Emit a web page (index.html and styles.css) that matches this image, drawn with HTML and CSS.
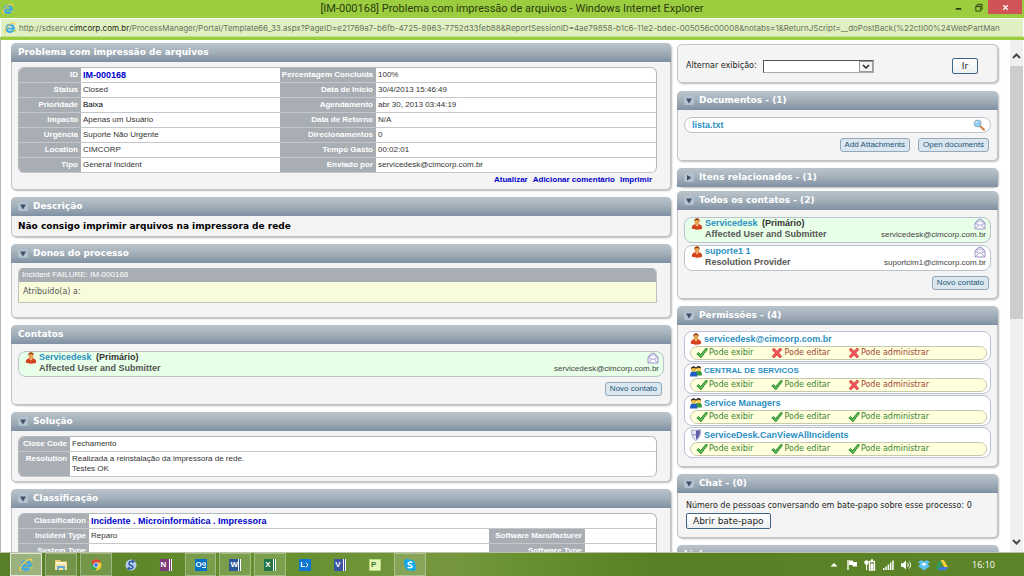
FILE: index.html
```html
<!DOCTYPE html>
<html lang="pt-BR">
<head>
<meta charset="utf-8">
<title>[IM-000168] Problema com impressão de arquivos</title>
<link rel="stylesheet" href="styles.css">
</head>
<body>
<svg class="defs" aria-hidden="true">
  <symbol id="ie" viewBox="0 0 16 16">
    <circle cx="8" cy="8.500" r="4.800" fill="none" stroke="#3fa9e8" stroke-width="3"/>
    <path d="M4 8.800h10" stroke="#3fa9e8" stroke-width="2.200"/>
    <path d="M11 10.200h5v2l-3 1z" fill="#a9cf63"/>
    <path d="M2.500 14.500C-.5 14 2 8 6.500 4.500 10.500 1 15.500.2 14.500 4" fill="none" stroke="#f3cf4a" stroke-width="1.500"/>
  </symbol>
  <symbol id="user" viewBox="0 0 12 12">
    <path d="M.8 10.500C.6 7.500 2.500 6 6 6s5.400 1.500 5.200 4.500c-2 1.600-8.400 1.600-10.400 0z" fill="#d3431c"/>
    <path d="M4.200 6.200 6 8.700l1.800-2.500z" fill="#ffc98a"/>
    <ellipse cx="6" cy="3.400" rx="2.500" ry="3" fill="#e8a254"/>
    <path d="M3.300 3.200C3.200-.6 8.800-.6 8.700 3.200 7.500 1.800 5 1.600 3.300 3.200z" fill="#9a3d12"/>
  </symbol>
  <symbol id="group" viewBox="0 0 12 12">
    <path d="M5 9.500c0-2.800 1-3.800 3.500-3.800S12 7 12 10.500H6z" fill="#3a9a35"/>
    <circle cx="8.600" cy="3.800" r="2.500" fill="#f5ca58"/>
    <path d="M6 3.800C5.800.2 11.400.2 11.200 3.800 10 2.300 7.500 2.300 6 3.800z" fill="#2b2723"/>
    <path d="M0 11.500C0 8 1 6.300 3.600 6.300S7.400 8 7.400 11.500z" fill="#1f5fc4"/>
    <circle cx="3.600" cy="4" r="2.600" fill="#f0c040"/>
    <path d="M.9 4C.8.300 6.500.3 6.300 4 5 2.500 2.500 2.500.9 4z" fill="#33302a"/>
  </symbol>
  <symbol id="shield" viewBox="0 0 12 12">
    <path d="M1.500 1C4 1.400 8 1.400 10.500.6c.4 5-1 9-5 11C2.500 9.500 1.200 6 1.500 1z" fill="#e3e4f2" stroke="#9698bd" stroke-width=".8"/>
    <path d="M6 1.600c1.500 0 2.800-.1 4-.4.300 4-1 7.500-4 9.500z" fill="#5b5fa5"/>
    <path d="M2.200 5H6v1.500H2.600z" fill="#a3a6cf"/>
  </symbol>
  <symbol id="mail" viewBox="0 0 12 12">
    <path d="M1 5 4.500 1.300h3L11 5v6H1z" fill="#fbfaff" stroke="#9c97c8"/>
    <path d="M3 5.800V3h6v2.800M1.500 10.700 4.800 7h2.400l3.300 3.700M1.200 5.400 4.800 7.400M10.800 5.400 7.200 7.400" fill="none" stroke="#9c97c8" stroke-width=".8"/>
  </symbol>
  <symbol id="ok" viewBox="0 0 12 12">
    <path d="M.8 7 2.600 5.400l2 2.200L10 1.200l1.500 1L5 10.800z" fill="#55ba4e" stroke="#237a2c" stroke-width=".8"/>
  </symbol>
  <symbol id="no" viewBox="0 0 12 12">
    <path d="M1.200 2.700 3 1.200l3 3 3-3.100 1.900 1.500L7.700 6l3 3.300L9 11 6 7.900 2.900 11 1.200 9.200 4.300 6z" fill="#f2585a" stroke="#cc2f35" stroke-width=".7"/>
  </symbol>
  <symbol id="lens" viewBox="0 0 12 12">
    <path d="m7 7 3.800 3.600" stroke="#cf8a55" stroke-width="2.400" stroke-linecap="round"/>
    <circle cx="4.700" cy="4.500" r="3.400" fill="#8fd0f0" stroke="#8fa9ba"/>
    <path d="M3 4.200c.3-1.200 1.200-1.700 2.200-1.700" fill="none" stroke="#fff"/>
  </symbol>
  <symbol id="down" viewBox="0 0 10 10">
    <rect width="10" height="9" rx="2" fill="#b3c2d1"/><path d="M2 2.500h6L5 7.500z" fill="#3d5064"/>
  </symbol>
  <symbol id="right" viewBox="0 0 10 10">
    <rect width="10" height="9" rx="2" fill="#b3c2d1"/><path d="M3 2v5.500l4.500-2.700z" fill="#3d5064"/>
  </symbol>
</svg>

<header class="titlebar">
  <svg class="icon-app"><use href="#ie"/></svg>
  <h1 class="window-title">[IM-000168] Problema com impressão de arquivos - Windows Internet Explorer</h1>
  <div class="window-buttons">
    <button class="win-btn" aria-label="Minimizar"><svg viewBox="0 0 10 10"><path d="M2 6.500h6" stroke="#2c3c10" stroke-width="2"/></svg></button>
    <button class="win-btn" aria-label="Restaurar"><svg viewBox="0 0 10 10"><path d="M2 3.500h5.500V9H2zM3.500 3V1.500H9v5.500H7.500M2 4h5.500" fill="none" stroke="#2c3c10"/></svg></button>
    <button class="win-btn win-close" aria-label="Fechar"><svg viewBox="0 0 10 10"><path d="m2.500 2.500 5 5m0-5-5 5" stroke="#fff" stroke-width="1.300"/></svg></button>
  </div>
</header>
<div class="address">
  <svg class="icon-app"><use href="#ie"/></svg>
  <span class="url">http://sdserv.<span class="url-host">cimcorp.com.br</span>/ProcessManager/Portal/Template66_33.aspx?PageID=e21769a7-b6fb-4725-8963-7752d33feb88&amp;ReportSessionID=4ae79858-b1c6-11e2-bdec-005056c00008&amp;notabs=1&amp;ReturnJScript=__doPostBack(%22ctl00%24WebPartMan</span>
</div>

<div class="viewport">
  <main class="columns">
    <div class="column">
      <section class="panel">
        <h2 class="panel-head">Problema com impressão de arquivos</h2>
        <div class="panel-body body-info">
          <table class="fields">
            <colgroup><col class="col-label"><col class="col-value"><col class="col-label2"><col></colgroup>
            <tr><th>ID</th><td><a class="id-link" href="#">IM-000168</a></td><th>Percentagem Concluída</th><td>100%</td></tr>
            <tr><th>Status</th><td>Closed</td><th>Data de Início</th><td>30/4/2013 15:46:49</td></tr>
            <tr><th>Prioridade</th><td class="strong">Baixa</td><th>Agendamento</th><td>abr 30, 2013 03:44:19</td></tr>
            <tr><th>Impacto</th><td>Apenas um Usuário</td><th>Data de Retorno</th><td>N/A</td></tr>
            <tr><th>Urgência</th><td>Suporte Não Urgente</td><th>Direcionamentos</th><td>0</td></tr>
            <tr><th>Location</th><td>CIMCORP</td><th>Tempo Gasto</th><td>00:02:01</td></tr>
            <tr><th>Tipo</th><td>General Incident</td><th>Enviado por</th><td>servicedesk@cimcorp.com.br</td></tr>
          </table>
          <nav class="links"><a href="#">Atualizar</a><a href="#">Adicionar comentário</a><a href="#">Imprimir</a></nav>
        </div>
      </section>

      <section class="panel">
        <h2 class="panel-head"><svg class="toggle"><use href="#down"/></svg>Descrição</h2>
        <div class="panel-body body-text"><p class="description">Não consigo imprimir arquivos na impressora de rede</p></div>
      </section>

      <section class="panel">
        <h2 class="panel-head"><svg class="toggle"><use href="#down"/></svg>Donos do processo</h2>
        <div class="panel-body body-owner">
          <div class="owner">
            <h3 class="owner-head">Incident FAILURE: IM-000168</h3>
            <p class="owner-text">Atribuído(a) a:</p>
          </div>
        </div>
      </section>

      <section class="panel">
        <h2 class="panel-head">Contatos</h2>
        <div class="panel-body body-list">
          <article class="contact primary">
            <svg class="icon"><use href="#user"/></svg>
            <div class="contact-main"><p><a class="name" href="#">Servicedesk</a> <b class="kind">(Primário)</b></p><p class="role">Affected User and Submitter</p></div>
            <div class="contact-side"><svg class="icon"><use href="#mail"/></svg><span>servicedesk@cimcorp.com.br</span></div>
          </article>
          <div class="actions"><button class="btn">Novo contato</button></div>
        </div>
      </section>

      <section class="panel">
        <h2 class="panel-head"><svg class="toggle"><use href="#down"/></svg>Solução</h2>
        <div class="panel-body body-table">
          <table class="fields">
            <colgroup><col class="col-short"><col></colgroup>
            <tr><th>Close Code</th><td>Fechamento</td></tr>
            <tr><th>Resolution</th><td>Realizada a reinstalação da impressora de rede.<br>Testes OK</td></tr>
          </table>
        </div>
      </section>

      <section class="panel">
        <h2 class="panel-head"><svg class="toggle"><use href="#down"/></svg>Classificação</h2>
        <div class="panel-body body-table">
          <table class="fields">
            <colgroup><col class="col-class"><col><col class="col-label2"><col class="col-end"></colgroup>
            <tr><th>Classification</th><td colspan="3"><a class="class-link" href="#">Incidente . Microinformática . Impressora</a></td></tr>
            <tr><th>Incident Type</th><td>Reparo</td><th>Software Manufacturer</th><td></td></tr>
            <tr><th>System Type</th><td></td><th>Software Type</th><td></td></tr>
          </table>
        </div>
      </section>
    </div>

    <aside class="column side">
      <section class="panel switcher">
        <label for="view">Alternar exibição:</label>
        <select id="view" class="view-select"><option></option></select>
        <button class="native-btn go">Ir</button>
      </section>

      <section class="panel">
        <h2 class="panel-head"><svg class="toggle"><use href="#down"/></svg>Documentos - (1)</h2>
        <div class="panel-body body-list">
          <div class="document"><a class="name" href="#">lista.txt</a><svg class="icon"><use href="#lens"/></svg></div>
          <div class="actions"><button class="btn">Add Attachments</button><button class="btn">Open documents</button></div>
        </div>
      </section>

      <section class="panel collapsed">
        <h2 class="panel-head"><svg class="toggle"><use href="#right"/></svg>Itens relacionados - (1)</h2>
      </section>

      <section class="panel">
        <h2 class="panel-head"><svg class="toggle"><use href="#down"/></svg>Todos os contatos - (2)</h2>
        <div class="panel-body body-list">
          <article class="contact primary">
            <svg class="icon"><use href="#user"/></svg>
            <div class="contact-main"><p><a class="name" href="#">Servicedesk</a> <b class="kind">(Primário)</b></p><p class="role">Affected User and Submitter</p></div>
            <div class="contact-side"><svg class="icon"><use href="#mail"/></svg><span>servicedesk@cimcorp.com.br</span></div>
          </article>
          <article class="contact">
            <svg class="icon"><use href="#user"/></svg>
            <div class="contact-main"><p><a class="name" href="#">suporte1 1</a></p><p class="role">Resolution Provider</p></div>
            <div class="contact-side"><svg class="icon"><use href="#mail"/></svg><span>suportcim1@cimcorp.com.br</span></div>
          </article>
          <div class="actions"><button class="btn">Novo contato</button></div>
        </div>
      </section>

      <section class="panel">
        <h2 class="panel-head"><svg class="toggle"><use href="#down"/></svg>Permissões - (4)</h2>
        <div class="panel-body body-perms">
          <article class="perm">
            <p class="perm-name"><svg class="icon"><use href="#user"/></svg><a class="name" href="#">servicedesk@cimcorp.com.br</a></p>
            <ul class="rights"><li><svg class="icon"><use href="#ok"/></svg>Pode exibir</li><li class="denied"><svg class="icon"><use href="#no"/></svg>Pode editar</li><li class="denied"><svg class="icon"><use href="#no"/></svg>Pode administrar</li></ul>
          </article>
          <article class="perm">
            <p class="perm-name"><svg class="icon"><use href="#group"/></svg><a class="name name-caps" href="#">CENTRAL DE SERVICOS</a></p>
            <ul class="rights"><li><svg class="icon"><use href="#ok"/></svg>Pode exibir</li><li><svg class="icon"><use href="#ok"/></svg>Pode editar</li><li class="denied"><svg class="icon"><use href="#no"/></svg>Pode administrar</li></ul>
          </article>
          <article class="perm">
            <p class="perm-name"><svg class="icon"><use href="#group"/></svg><a class="name" href="#">Service Managers</a></p>
            <ul class="rights"><li><svg class="icon"><use href="#ok"/></svg>Pode exibir</li><li><svg class="icon"><use href="#ok"/></svg>Pode editar</li><li><svg class="icon"><use href="#ok"/></svg>Pode administrar</li></ul>
          </article>
          <article class="perm">
            <p class="perm-name"><svg class="icon"><use href="#shield"/></svg><a class="name" href="#">ServiceDesk.CanViewAllIncidents</a></p>
            <ul class="rights"><li><svg class="icon"><use href="#ok"/></svg>Pode exibir</li><li><svg class="icon"><use href="#ok"/></svg>Pode editar</li><li><svg class="icon"><use href="#ok"/></svg>Pode administrar</li></ul>
          </article>
        </div>
      </section>

      <section class="panel">
        <h2 class="panel-head"><svg class="toggle"><use href="#down"/></svg>Chat - (0)</h2>
        <div class="panel-body body-chat">
          <p>Número de pessoas conversando em bate-papo sobre esse processo: 0</p>
          <button class="native-btn">Abrir bate-papo</button>
        </div>
      </section>

      <section class="panel"><h2 class="panel-head">Links</h2></section>
    </aside>
  </main>
  <div class="scrollbar">
    <svg class="scroll-arrow" viewBox="0 0 12 12"><path d="m2.500 8 3.500-3.500L9.500 8" fill="none" stroke="#4a4a4a" stroke-width="2"/></svg>
    <div class="scroll-track"><div class="scroll-thumb"></div></div>
    <svg class="scroll-arrow" viewBox="0 0 12 12"><path d="M2.500 4 6 7.500 9.500 4" fill="none" stroke="#4a4a4a" stroke-width="2"/></svg>
  </div>
</div>

<footer class="taskbar">
  <div class="apps">
    <button class="app open active" aria-label="Internet Explorer"><svg class="app-icon"><use href="#ie"/></svg></button>
    <button class="app open" aria-label="Explorador de Arquivos"><svg class="app-icon" viewBox="0 0 14 14"><path d="M1 2h5l1 1.500h6V12H1z" fill="#e9cf7a"/><path d="M2 4h10v4H2z" fill="#fbf4d6"/><path d="M1 6h12v6H1z" fill="#f4e3a2"/><path d="M4 12V9h6v3" fill="none" stroke="#5fa9dc" stroke-width="1.800"/></svg></button>
    <button class="app open" aria-label="Chrome"><svg class="app-icon" viewBox="0 0 14 14"><circle cx="7" cy="7" r="5.500" fill="#f4c92d"/><path d="M2.200 4.300A5.500 5.500 0 0 0 6.600 12.500L9 8z" fill="#36a352"/><path d="M2.200 4.200 4.700 8 7 4.500h5A5.500 5.500 0 0 0 2.200 4.200z" fill="#dc4437"/><circle cx="7" cy="7" r="2.600" fill="#fff"/><circle cx="7" cy="7" r="2" fill="#3f7de0"/></svg></button>
    <button class="app" aria-label="Sincronizar"><svg class="app-icon" viewBox="0 0 14 14"><circle cx="7" cy="7" r="5.500" fill="#b7cdea"/><path d="M10 3.500C7 2.500 4.500 4 5 6s4.500 1 4 3.200-3 2-5.200 1" fill="none" stroke="#28529c" stroke-width="1.400"/><path d="M8.500 1.500 11 4 8 5.300zM5.500 12.500 3 10l3-1.200z" fill="#28529c"/></svg></button>
    <button class="app" aria-label="OneNote"><span class="tile onenote">N</span></button>
    <button class="app open" aria-label="Outlook"><span class="tile outlook">O<svg viewBox="0 0 4 8"><path d="M0 2h4v4.500H0M0 3l2 1.500L4 3" fill="none" stroke="#fff"/></svg></span></button>
    <button class="app open" aria-label="Word"><span class="tile word">W</span></button>
    <button class="app open" aria-label="Excel"><span class="tile excel">X</span></button>
    <button class="app" aria-label="Lync"><span class="tile lync">L<svg viewBox="0 0 4 8"><path d="M1 1.500 3 4 1 6.500" fill="none" stroke="#fff"/></svg></span></button>
    <button class="app" aria-label="Visio"><span class="tile visio">V</span></button>
    <button class="app" aria-label="Project"><span class="tile project">P</span></button>
    <button class="app open" aria-label="Skype"><svg class="app-icon" viewBox="0 0 14 14"><circle cx="7" cy="7" r="5.500" fill="#12a9e8"/><circle cx="4.300" cy="4.300" r="3.300" fill="#12a9e8"/><circle cx="9.700" cy="9.700" r="3.300" fill="#12a9e8"/><path d="M9.200 5C8 3.600 5 3.900 5.100 5.600 5.200 7.300 9.100 6.500 9 8.500c-.1 1.700-3.200 1.800-4.300.4" fill="none" stroke="#fff" stroke-width="1.500"/></svg></button>
  </div>
  <div class="tray">
    <svg viewBox="0 0 12 12"><path d="M2.500 7.500 6 4l3.500 3.500z" fill="#fff"/></svg>
    <svg viewBox="0 0 12 12"><path d="M2 1v10" stroke="#fff" stroke-width="1.400"/><path d="M3 1.500h4V3h4v4.500H6.500V6H3z" fill="#fff"/></svg>
    <svg viewBox="0 0 12 12"><path d="M5.500 2.500h5v8.500h-5zM7 1h2" fill="none" stroke="#fff" stroke-width="1.300"/><path d="M7 5h2v4.500H7zM1 2h3v3H1zM2.500 5v6" fill="#fff" stroke="#fff"/></svg>
    <svg viewBox="0 0 12 12"><path d="M1 9h1.500v2H1zM3.300 7.500h1.500V11H3.300zM5.600 5.500h1.500V11H5.600zM7.900 3.500h1.500V11H7.900zM10.200 1.500h1.500V11h-1.500z" fill="#fff"/></svg>
    <svg viewBox="0 0 12 12"><path d="M1 4.300h2L6 1.500v9L3 7.700H1z" fill="#fff"/><path d="M7.500 4c1 1.300 1 2.700 0 4M9 2.500c2 2.200 2 4.800 0 7" fill="none" stroke="#fff"/></svg>
    <svg viewBox="0 0 12 12"><path d="M3.500 1 6 2.800 8.500 1 12 3.300 9.700 5.300 12 7.300 9 9.200 6 11.500 3 9.200 0 7.300l2.300-2L0 3.300z" fill="#5fc2f2"/><path d="M6 3.600 8.500 5.300 6 7 3.500 5.300z" fill="#fff"/></svg>
    <svg viewBox="0 0 12 12"><path d="M4.200 1h3.600L12 8H8.300z" fill="#f7cf3d"/><path d="M4.200 1 0 8l2 3.200L6 4.300z" fill="#2ea162"/><path d="M4 8h8l-2 3.200H2z" fill="#3f7be0"/></svg>
    <time class="clock">16:10</time>
  </div>
</footer>
</body>
</html>
```
FILE: styles.css
```css
* { box-sizing: border-box; }
body { margin: 0; height: 100vh; display: flex; flex-direction: column; overflow: hidden; background: #fff; color: #333; font: 8px/10px "Liberation Sans", Arial, sans-serif; }
p, h1, h2, h3, ul { margin: 0; padding: 0; font-weight: normal; }
a { text-decoration: none; }
button { font: inherit; padding: 0; margin: 0; cursor: pointer; }
svg { display: block; flex: none; }
.defs { position: absolute; width: 0; height: 0; }

.titlebar { position: relative; flex: none; height: 18px; display: flex; align-items: center; padding-left: 2px; background: #9bcd3f; }
.icon-app { width: 12px; height: 12px; }
.window-title { flex: 1; padding-right: 14px; text-align: center; color: #2c3c10; font: 11px/18px Roboto, "Open Sans", sans-serif; white-space: nowrap; }
.window-buttons { position: absolute; top: 0; right: 2px; display: flex; align-items: flex-start; }
.win-btn { width: 20px; height: 14px; border: 0; background: none; display: grid; place-items: center; }
.win-btn svg { width: 9px; height: 9px; }
.win-close { width: 34px; background: #d05456; }

.address { flex: none; height: 18px; margin: 1px 1px 0 1px; padding-left: 3px; display: flex; align-items: center; gap: 3px; background: #e0f0c2; border-bottom: 1px solid #c5df95; overflow: hidden; }
.url { color: #68745e; font: 8px/16px Inter, Roboto, sans-serif; white-space: nowrap; }
.url-host { color: #1d2610; }

.viewport { flex: 1; min-height: 0; display: flex; border-top: 3px solid #9bcd3f; border-left: 1px solid #b5b5b5; overflow: hidden; }
.columns { flex: 1; min-width: 0; display: grid; grid-template-columns: 660fr 321fr; column-gap: 6px; padding: 3px 12px 0 10px; }
.column { display: flex; flex-direction: column; gap: 7px; min-width: 0; }
.side { padding-top: 1px; }

.panel { flex: none; border-radius: 5px; background: #f4f4f4; border: 1px solid #c3c3c5; border-top: 0; box-shadow: 1px 1px 2px #b9b9b9; }
.collapsed { border-bottom: 0; margin-bottom: -3px; }
.panel-head { height: 19px; margin: 0 -1px; padding: 0 7px; display: flex; align-items: center; gap: 5px; border-radius: 5px 5px 0 0; background: linear-gradient(#bbc4cc, #a2afb9 50%, #8090a3); color: #fff; font: bold 9px/19px "DejaVu Sans", Verdana, sans-serif; }
.toggle { width: 10px; height: 10px; }
.body-info { padding: 5px 13px 4px 6px; }
.body-table { padding: 5px 13px 4px 6px; }
.body-text { padding: 5px 6px; }
.body-owner { padding: 5px 13px 14px 6px; }
.body-list { padding: 7px 6px 8px; }
.body-perms { padding: 6px 6px 8px; display: grid; gap: 1px; }
.body-chat { padding: 8px; }

.fields { width: 100%; table-layout: fixed; border-collapse: separate; border-spacing: 0; border: 1px solid #b4b7bd; border-bottom: 0; border-radius: 6px; overflow: hidden; background: #fff; }
.fields th, .fields td { padding: 2px; line-height: 10px; vertical-align: top; border-bottom: 1px solid #c4c7cb; text-align: left; white-space: nowrap; }
.fields th { padding-right: 3px; padding-left: 0; text-align: right; color: #fff; background: #a9aeb4; }
.fields tr:last-child > *:last-child { border-bottom-right-radius: 5px; }
.col-label { width: 62px; }
.col-value { width: 199px; }
.col-label2 { width: 96px; }
.col-short { width: 51px; }
.col-class { width: 70px; }
.col-end { width: 71px; }
.strong { color: #000; }
.id-link, .class-link { color: #00c; font-weight: bold; font-size: 9px; vertical-align: top; }
.links { display: flex; justify-content: flex-end; gap: 5px; padding: 2px 5px 0 0; font-weight: bold; }
.links a { color: #00c; }

.description { color: #000; font: bold 9px/10px "DejaVu Sans", Verdana, sans-serif; }
.owner { border: 1px solid #c1c4b8; border-top: 0; border-radius: 5px 5px 0 0; overflow: hidden; background: #f9fcdc; }
.owner-head { height: 14px; padding-left: 3px; background: #a9aeb4; color: #fff; font-size: 8px; line-height: 14px; }
.owner-text { padding: 5px 4px; color: #555; font: 8px/10px "DejaVu Sans", Verdana, sans-serif; }

.name { color: #2b8fc2; font-size: 9px; font-weight: bold; }
.name-caps { font-size: 8px; }
.icon { width: 12px; height: 12px; }
.contact { display: flex; gap: 2px; padding: 0 4px 2px 6px; border: 1px solid #b9c3cc; border-radius: 8px; background: #fff; }
.contact + .contact { margin-top: 2px; }
.primary { background: #e8ffe8; }
.contact-main { flex: 1; line-height: 11px; font-size: 9px; }
.role, .kind { color: #555; font-weight: bold; }
.kind { margin-left: 2px; color: #333; }
.contact-side { display: flex; flex-direction: column; align-items: flex-end; color: #444; line-height: 10px; }
.actions { display: flex; justify-content: flex-end; gap: 8px; padding: 5px 2px 0 0; }
.btn { height: 14px; padding: 0 4px; border: 1px solid #94a8b8; border-radius: 3px; background: #dbe7f0; color: #1d5574; line-height: 12px; }
.document { display: flex; align-items: center; justify-content: space-between; height: 16px; padding: 0 5px 0 7px; border: 1px solid #bcc3d0; border-radius: 8px; background: #fff; }

.switcher { height: 39px; display: flex; align-items: center; padding: 5px 19px 0 8px; border: 1px solid #c3c5ca; margin-bottom: 1px; color: #222; font: 8px/10px "DejaVu Sans", Verdana, sans-serif; }
.view-select { width: 111px; height: 13px; margin-left: 6px; padding: 0; border: 1px solid #aaa; border-top-color: #555; border-left: 1px solid #555; border-radius: 0; appearance: none; background: #fff url("data:image/svg+xml,%3Csvg xmlns='http://www.w3.org/2000/svg' width='14' height='11'%3E%3Crect x='.5' y='.5' width='13' height='10' fill='%23f4f4f4' stroke='%23999'/%3E%3Cpath d='M4 4l3 3 3-3' fill='none' stroke='%23222' stroke-width='1.500'/%3E%3C/svg%3E") right center no-repeat; }
.native-btn { height: 16px; border: 1px solid #3f648a; border-radius: 2px; background: linear-gradient(#fff, #edf0f0); color: #222; padding: 0 6px; font: 9px/12px "DejaVu Sans", Verdana, sans-serif; }
.go { width: 26px; margin-left: auto; }

.perm { border: 1px solid #bac3d3; border-radius: 8px; background: #fff; padding: 0 3px 1px 5px; }
.perm-name { display: flex; align-items: center; gap: 2px; height: 14px; }
.rights { display: grid; grid-template-columns: 76fr 77fr 139fr; height: 14px; padding-left: 5px; border: 1px solid #c5c9ae; border-radius: 7px; background: #ffffdc; color: #3c8434; font: 8px/12px "DejaVu Sans", Verdana, sans-serif; list-style: none; }
.rights li { display: flex; align-items: center; gap: 1px; white-space: nowrap; }
.denied { color: #a04535; }
.body-chat p { color: #222; font: 8px/10px "DejaVu Sans", Verdana, sans-serif; white-space: nowrap; margin-bottom: 2px; }

.scrollbar { flex: none; width: 13px; display: flex; flex-direction: column; background: #f0f0f0; margin-right: 1px; }
.scroll-arrow { width: 13px; height: 12px; margin: 10px 0 4px; }
.scroll-track { flex: 1; }
.scroll-thumb { height: 55%; background: #cdcdcd; }

.taskbar { flex: none; height: 24px; display: flex; justify-content: space-between; border-top: 1px solid #b9c2a8; background: linear-gradient(90deg, #587e28, #648f2d 25%, #76973f 44%, #66902f 52%, #587f24 65%, #5e8529); }
.apps { width: 416px; margin-left: 10px; display: grid; grid-template-columns: repeat(12, 1fr); gap: 3px; }
.app { border: 1px solid transparent; background: none; display: grid; place-items: center; }
.open { background: #ffffff26; border-color: #ffffff4d; }
.active { background: #ffffff66; border-color: #ffffffb3; }
.app-icon { width: 14px; height: 14px; }
.tile { width: 12px; height: 12px; display: flex; align-items: center; justify-content: flex-start; padding-left: 1px; color: #fff; font: bold 8px/12px "Liberation Sans", Arial, sans-serif; border-right: 3px double #fff; }
.tile svg { width: 4px; height: 8px; }
.onenote { background: #80397b; }
.outlook { background: #0072c6; border: 0; }
.word { background: #2b579a; }
.excel { background: #217346; }
.lync { background: #0a78d0; border: 0; }
.visio { background: #3955a3; }
.project { background: #e7f5b4; color: #31752f; border: 1px solid #b5dc78; }
.tray { display: flex; align-items: center; gap: 6px; padding-right: 29px; }
.tray svg { width: 12px; height: 12px; }
.clock { margin-left: 18px; color: #fff; font: 9px/12px "Open Sans", "Noto Sans", sans-serif; }
```
